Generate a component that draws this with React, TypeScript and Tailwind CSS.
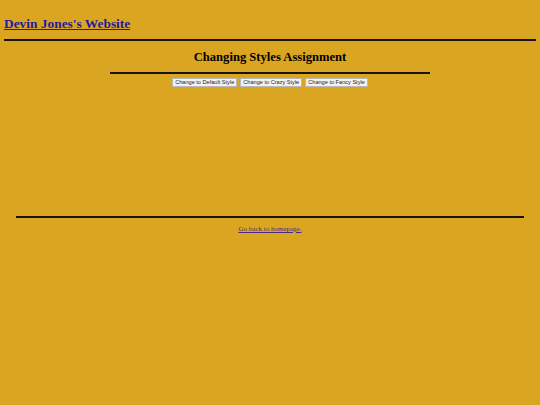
import React from "react";

export default function App() {
  return (
    <div className="min-h-[405px] w-full bg-[#DAA520] font-['Liberation_Serif',serif] text-black">
      <div className="px-[4px] pt-[16px] text-[13.4px] leading-[16px]">
        <a href="#" className="font-bold text-[#1f1aa0] underline">
          Devin Jones's Website
        </a>
      </div>
      <div className="mx-[4px] mt-[7px] h-[2px] bg-[#1a1208]" />
      <h2 className="mt-[9px] text-center text-[12.6px] font-bold leading-[15px]">Changing Styles Assignment</h2>
      <div className="mx-auto mt-[7px] h-[2px] w-[320px] bg-[#1a1208]" />
      <div className="mt-[4px] flex justify-center gap-[3px] font-['Liberation_Sans',sans-serif] leading-[7px]">
        <button className="h-[9px] border border-[#b8b8b8] bg-[#f2f2f2] px-[2px] text-[5.6px] leading-[7px] text-[#222]">Change to Default Style</button>
        <button className="h-[9px] border border-[#b8b8b8] bg-[#f2f2f2] px-[2px] text-[5.6px] leading-[7px] text-[#222]">Change to Crazy Style</button>
        <button className="h-[9px] border border-[#b8b8b8] bg-[#f2f2f2] px-[2px] text-[5.6px] leading-[7px] text-[#222]">Change to Fancy Style</button>
      </div>
      <div className="mx-[16px] mt-[129px] h-[2px] bg-[#1a1208]" />
      <div className="mt-[7px] text-center text-[7px] leading-[8px]">
        <a href="#" className="text-[#4a2a80] underline">
          Go back to homepage.
        </a>
      </div>
    </div>
  );
}
